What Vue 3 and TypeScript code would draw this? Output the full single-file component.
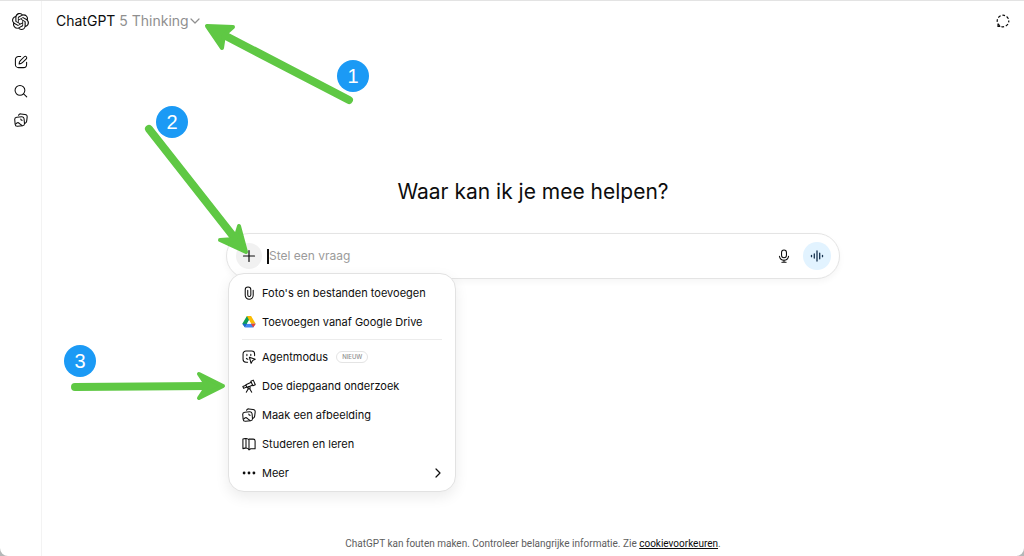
<script setup lang="ts">
import { ref } from 'vue'

interface MenuItem {
  id: string
  label: string
  badge?: string
  more?: boolean
}

const question = ref('')

const attachItems: MenuItem[] = [
  { id: 'clip', label: "Foto's en bestanden toevoegen" },
  { id: 'drive', label: 'Toevoegen vanaf Google Drive' },
]

const toolItems: MenuItem[] = [
  { id: 'agent', label: 'Agentmodus', badge: 'NIEUW' },
  { id: 'research', label: 'Doe diepgaand onderzoek' },
  { id: 'image', label: 'Maak een afbeelding' },
  { id: 'study', label: 'Studeren en leren' },
  { id: 'more', label: 'Meer', more: true },
]

const groups: MenuItem[][] = [attachItems, toolItems]
</script>

<template>
  <div class="page">
    <svg class="defs" width="0" height="0" aria-hidden="true">
      <symbol id="i-clip" viewBox="0 0 20 20">
        <path d="M16 6v7.300a5.700 5.700 0 0 1-11.400 0V5.400a4 4 0 0 1 8 0v7.500a2.200 2.200 0 0 1-4.400 0V6" />
      </symbol>
      <symbol id="i-drive" viewBox="0 0 20 20">
        <g stroke="none">
          <path fill="#0f9d58" d="M7 1.500h3l2 4-2.500 3.500L4.200 17.300 .5 12.400z" />
          <path fill="#fbbc04" d="M7 1.500h6l6.500 10.900h-6.700z" />
          <path fill="#4285f4" d="M7.400 12.400H19.500L16 18H4.200z" />
          <path fill="#ea4335" d="M12.800 12.400h6.700L16 18z" />
          <path fill="#1967d2" d="M.5 12.400h6.900L4.200 18z" />
          <path fill="#fff" d="M10 7.300l3 5.100H7z" />
        </g>
      </symbol>
      <symbol id="i-agent" viewBox="0 0 20 20">
        <path d="M8 17.500H5.700A4.200 4.200 0 0 1 1.500 13.300V5.700A4.200 4.200 0 0 1 5.700 1.500h8.100A4.200 4.200 0 0 1 18 5.700V8" />
        <path d="M7 6v2M12.600 6v2M6.300 12c.5.700 1.200 1.100 2.200 1.200" />
        <path d="M10.500 10.300l8.400 3-3.900 1.900-2 3.900z" />
      </symbol>
      <symbol id="i-research" viewBox="0 0 20 20">
        <path d="M12.600 3.200l3.500-1.600 2.900 6.500-3.500 1.600z" />
        <path d="M13.300 4.700L5.500 8.200l1.700 3.900 7.600-3.300M5.700 8.800l-4.500 2 1.100 2.600 4.500-2" />
        <circle cx="10" cy="12.500" r="1.700" />
        <path d="M9 14l-2.900 4.800M11 14l2.900 4.800" />
      </symbol>
      <symbol id="i-image" viewBox="0 0 20 20">
        <path d="M6.500 3.300c.6-1.500 1.800-2.200 3.400-2l5.800.7c2.300.3 3.400 1.700 3.100 3.900l-.7 5.700c-.2 1.500-.9 2.500-2.100 2.900" />
        <rect x="1.300" y="5.600" width="13.400" height="13" rx="3.200" transform="rotate(-5 8 12)" />
        <path d="M2.200 15.800c2-2.400 3.700-2.600 5.400-1.100 1.400 1.300 2.400 2.100 3.800 3.300" />
        <path d="M9.700 8.700c.2 1.200.8 1.800 2 1.700" />
      </symbol>
      <symbol id="i-study" viewBox="0 0 20 20">
        <path d="M10 4.300C8.700 2.500 6.800 1.900 4.500 2.300L1.300 3v13.600l3.200-.7c2.200-.4 4 .3 5.500 2.300z" />
        <path d="M10 3h6c1.700 0 2.700.9 2.700 2.700v11H12.500L10 18.200M5.700 2.500v13" />
      </symbol>
      <symbol id="i-more" viewBox="0 0 20 20">
        <g fill="currentColor" stroke="none">
          <circle cx="3" cy="10" r="2" /><circle cx="10" cy="10" r="2" /><circle cx="17" cy="10" r="2" />
        </g>
      </symbol>
    </svg>

    <nav class="sidebar" aria-label="Zijbalk">
      <a class="side-link logo" href="#" aria-label="ChatGPT">
        <svg viewBox="0 0 24 24" width="17" height="17" fill="currentColor">
          <path d="M22.2819 9.8211a5.9847 5.9847 0 0 0-.5157-4.9108 6.0462 6.0462 0 0 0-6.5098-2.9A6.0651 6.0651 0 0 0 4.9807 4.1818a5.9847 5.9847 0 0 0-3.9977 2.9 6.0462 6.0462 0 0 0 .7427 7.0966 5.98 5.98 0 0 0 .511 4.9107 6.051 6.051 0 0 0 6.5146 2.9001A5.9847 5.9847 0 0 0 13.2599 24a6.0557 6.0557 0 0 0 5.7718-4.2058 5.9894 5.9894 0 0 0 3.9977-2.9001 6.0557 6.0557 0 0 0-.7475-7.0729zm-9.022 12.6081a4.4755 4.4755 0 0 1-2.8764-1.0408l.1419-.0804 4.7783-2.7582a.7948.7948 0 0 0 .3927-.6813v-6.7369l2.02 1.1686a.071.071 0 0 1 .038.052v5.5826a4.504 4.504 0 0 1-4.4945 4.4944zm-9.6607-4.1254a4.4708 4.4708 0 0 1-.5346-3.0137l.142.0852 4.783 2.7582a.7712.7712 0 0 0 .7806 0l5.8428-3.3685v2.3324a.0804.0804 0 0 1-.0332.0615L9.74 19.9502a4.4992 4.4992 0 0 1-6.1408-1.6464zM2.3408 7.8956a4.485 4.485 0 0 1 2.3655-1.9728V11.6a.7664.7664 0 0 0 .3879.6765l5.8144 3.3543-2.0201 1.1685a.0757.0757 0 0 1-.071 0l-4.8303-2.7865A4.504 4.504 0 0 1 2.3408 7.872zm16.5963 3.8558L13.1038 8.364 15.1192 7.2a.0757.0757 0 0 1 .071 0l4.8303 2.7913a4.4944 4.4944 0 0 1-.6765 8.1042v-5.6772a.79.79 0 0 0-.407-.667zm2.0107-3.0231l-.142-.0852-4.7735-2.7818a.7759.7759 0 0 0-.7854 0L9.409 9.2297V6.8974a.0662.0662 0 0 1 .0284-.0615l4.8303-2.7866a4.4992 4.4992 0 0 1 6.6802 4.66zM8.3065 12.863l-2.02-1.1638a.0804.0804 0 0 1-.038-.0567V6.0742a4.4992 4.4992 0 0 1 7.3757-3.4537l-.142.0805L8.704 5.459a.7948.7948 0 0 0-.3927.6813zm1.0976-2.3654l2.602-1.4998 2.6069 1.4998v2.9994l-2.5974 1.4997-2.6067-1.4997Z" />
        </svg>
      </a>
      <a class="side-link" href="#" aria-label="Nieuwe chat">
        <svg class="line" viewBox="0 0 20 20" width="14" height="14">
          <path d="M9.500 2H6.500A4.500 4.500 0 0 0 2 6.500v7A4.500 4.500 0 0 0 6.500 18h7a4.500 4.500 0 0 0 4.500-4.500v-3" />
          <path d="M7.300 12.700c0-2.200.6-3.400 1.800-4.600l5.600-5.600a2 2 0 0 1 2.900 2.900l-5.600 5.600c-1.200 1.200-2.500 1.700-4.700 1.700z" />
        </svg>
      </a>
      <a class="side-link" href="#" aria-label="Chats zoeken">
        <svg class="line" viewBox="0 0 20 20" width="14" height="14">
          <circle cx="8.500" cy="9" r="7" /><path d="M13.700 14.200l4.500 4.300" />
        </svg>
      </a>
      <a class="side-link" href="#" aria-label="Bibliotheek">
        <svg class="line" width="14" height="14"><use href="#i-image" /></svg>
      </a>
    </nav>

    <div class="content">
      <header class="topbar">
        <button class="model" type="button">
          <span>ChatGPT <span class="muted">5 Thinking</span></span>
          <svg class="line chevron" viewBox="0 0 10 10" width="10" height="10"><path d="M1 3l4 4 4-4" /></svg>
        </button>
        <button class="temporary" type="button" aria-label="Tijdelijke chat">
          <svg viewBox="0 0 16 16" width="14" height="14" fill="none" stroke="currentColor" stroke-width="1.400">
            <circle cx="8" cy="8" r="6.600" stroke-dasharray="3.200 1.984" stroke-dashoffset="1.600" />
            <path d="M2.300 11.800v2.300h2.600" />
          </svg>
        </button>
      </header>

      <main class="hero">
        <h1>Waar kan ik je mee helpen?</h1>
        <form class="composer" @submit.prevent>
          <button class="plus" type="button" aria-label="Toevoegen" aria-expanded="true">
            <svg class="line" viewBox="0 0 14 14" width="14" height="14"><path d="M7 1.500v11M1.500 7h11" /></svg>
          </button>
          <span class="caret"></span>
          <input v-model="question" type="text" placeholder="Stel een vraag" aria-label="Stel een vraag" />
          <button class="mic" type="button" aria-label="Dicteren">
            <svg class="line" viewBox="0 0 20 20" width="14" height="14">
              <rect x="6.500" y="1.500" width="7" height="11" rx="3.500" />
              <path d="M3.500 10.500a6.600 6.600 0 0 0 13 0M10 15.800v3M7 18.800h6" />
            </svg>
          </button>
          <button class="voice" type="button" aria-label="Spraakmodus">
            <svg viewBox="0 0 14 14" width="14" height="14" fill="none" stroke="currentColor" stroke-width="1.300" stroke-linecap="round">
              <path d="M1.500 6.300v1.400M4.300 5v4M7 2v10M9.700 4.200v5.600M12.500 6.300v1.400" />
            </svg>
          </button>

          <div class="menu">
            <ul v-for="(group, index) in groups" :key="index">
              <li v-for="item in group" :key="item.id">
                <button type="button" class="menu-item">
                  <svg class="line" width="14" height="14"><use :href="`#i-${item.id}`" /></svg>
                  <span>{{ item.label }}</span>
                  <span v-if="item.badge" class="tag">{{ item.badge }}</span>
                  <svg v-if="item.more" class="line go" viewBox="0 0 10 10" width="10" height="10"><path d="M4 1l4 4-4 4" /></svg>
                </button>
              </li>
            </ul>
          </div>
        </form>
      </main>

      <footer>
        ChatGPT kan fouten maken. Controleer belangrijke informatie. Zie <a href="#">cookievoorkeuren</a>.
      </footer>
    </div>

    <svg class="annotations" viewBox="0 0 400 410" width="400" height="410" aria-hidden="true">
      <g class="arrow">
        <path class="shaft" d="M349 100L222 34" />
        <path class="head" d="M207 26L233 27L224 35L222 48z" />
        <path class="shaft" d="M149 129L237 241" />
        <path class="head" d="M246 252L239 226L235 239L220 240z" />
        <path class="shaft" d="M75 387L208 386" />
        <path class="head" d="M223 386L199 374L207 386L199 398z" />
      </g>
      <g class="step">
        <circle cx="353" cy="76" r="16" /><text x="353" y="83">1</text>
        <circle cx="172" cy="122" r="16" /><text x="172" y="129">2</text>
        <circle cx="80" cy="361" r="16" /><text x="80" y="368">3</text>
      </g>
    </svg>
  </div>
</template>

<style>
body {
  margin: 0;
  background: #b4b8b8;
}
</style>

<style scoped>
* {
  box-sizing: border-box;
}

.page {
  position: relative;
  display: flex;
  min-height: 100vh;
  overflow: hidden;
  border-top: 1px solid #e3e3e3;
  border-radius: 0 0 8px 8px;
  background: #fff;
  color: #0d0d0d;
  font-family: Inter, "Liberation Sans", sans-serif;
}

.defs {
  position: absolute;
}

button {
  padding: 0;
  border: 0;
  background: none;
  color: inherit;
  font: inherit;
  cursor: pointer;
}

svg {
  display: block;
  flex: none;
}

.line {
  fill: none;
  stroke: currentColor;
  stroke-width: 1.5;
  stroke-linecap: round;
  stroke-linejoin: round;
}

.sidebar {
  display: flex;
  flex: none;
  flex-direction: column;
  align-items: center;
  width: 42px;
  border-right: 1px solid #f3f3f3;
}

.side-link {
  display: grid;
  place-items: center;
  width: 29px;
  height: 29px;
  color: inherit;
}

.logo {
  height: 40px;
  margin-bottom: 6px;
}

.content {
  display: flex;
  flex: 1;
  flex-direction: column;
  min-width: 0;
}

.topbar {
  display: flex;
  align-items: center;
  justify-content: space-between;
  height: 40px;
  padding: 0 14px;
}

.model {
  display: flex;
  align-items: center;
  gap: 1px;
  font-size: 14px;
  line-height: 20px;
}

.muted,
.chevron {
  color: #8f8f8f;
}

.chevron {
  stroke-width: 1.2;
}

.hero {
  display: flex;
  flex: 1;
  flex-direction: column;
  align-items: center;
  padding: 137px 24px 0;
}

h1 {
  margin: 0 0 27px;
  font-size: 21px;
  font-weight: 400;
  line-height: 28px;
}

.composer {
  position: relative;
  display: flex;
  align-items: center;
  width: 100%;
  max-width: 614px;
  height: 46px;
  padding: 0 8px 0 9px;
  border: 1px solid #e4e4e4;
  border-radius: 23px;
  background: #fff;
  box-shadow: 0 3px 6px rgba(0, 0, 0, 0.04);
}

.plus,
.voice,
.mic {
  display: grid;
  flex: none;
  place-items: center;
  border-radius: 50%;
}

.plus {
  width: 26px;
  height: 26px;
  background: #f1f1f1;
}

.plus .line {
  stroke-width: 1.2;
}

.caret {
  width: 2px;
  height: 15px;
  margin-left: 5px;
  background: #0d0d0d;
}

input {
  flex: 1;
  min-width: 0;
  padding: 0;
  border: 0;
  outline: 0;
  background: none;
  color: inherit;
  font: inherit;
  font-size: 12px;
  line-height: 20px;
}

input::placeholder {
  color: #9b9b9b;
  opacity: 1;
}

.mic {
  width: 28px;
  height: 28px;
  margin-right: 5px;
}

.voice {
  width: 28px;
  height: 28px;
  background: #e2f3ff;
  color: #16324f;
}

.menu {
  position: absolute;
  z-index: 1;
  top: 39px;
  left: 1px;
  width: 228px;
  padding: 5px 13px 4px;
  border: 1px solid #e2e2e2;
  border-radius: 16px;
  background: #fff;
  box-shadow: 0 5px 14px rgba(0, 0, 0, 0.08);
}

ul {
  display: grid;
  gap: 1px;
  margin: 0;
  padding: 0;
  list-style: none;
}

ul + ul {
  margin-top: 3px;
  padding-top: 3px;
  border-top: 1px solid #ececec;
}

.menu-item {
  display: flex;
  align-items: center;
  gap: 6px;
  width: 100%;
  height: 28px;
  font-size: 11px;
  line-height: 16px;
}

.tag {
  margin-left: 2px;
  padding: 0 5px;
  border: 1px solid #e4e4e4;
  border-radius: 6px;
  color: #8f8f8f;
  font-size: 6px;
  font-weight: 500;
  line-height: 10px;
}

.go {
  margin-left: auto;
  stroke-width: 1.2;
}

footer {
  padding: 0 16px 4px;
  color: #5d5d5d;
  font-family: Roboto, "Liberation Sans", sans-serif;
  font-size: 10px;
  line-height: 16px;
  text-align: center;
}

footer a {
  color: #0d0d0d;
}

.annotations {
  position: absolute;
  z-index: 2;
  top: -1px;
  left: 0;
  pointer-events: none;
}

.arrow {
  fill: #5fc844;
  stroke: #5fc844;
  stroke-linecap: round;
  stroke-linejoin: round;
}

.shaft {
  stroke-width: 8;
}

.head {
  stroke-width: 4;
}

.step {
  fill: #1b9af5;
}

.step text {
  fill: #fff;
  font-family: "Liberation Sans", Arial, sans-serif;
  font-size: 20px;
  text-anchor: middle;
}
</style>
